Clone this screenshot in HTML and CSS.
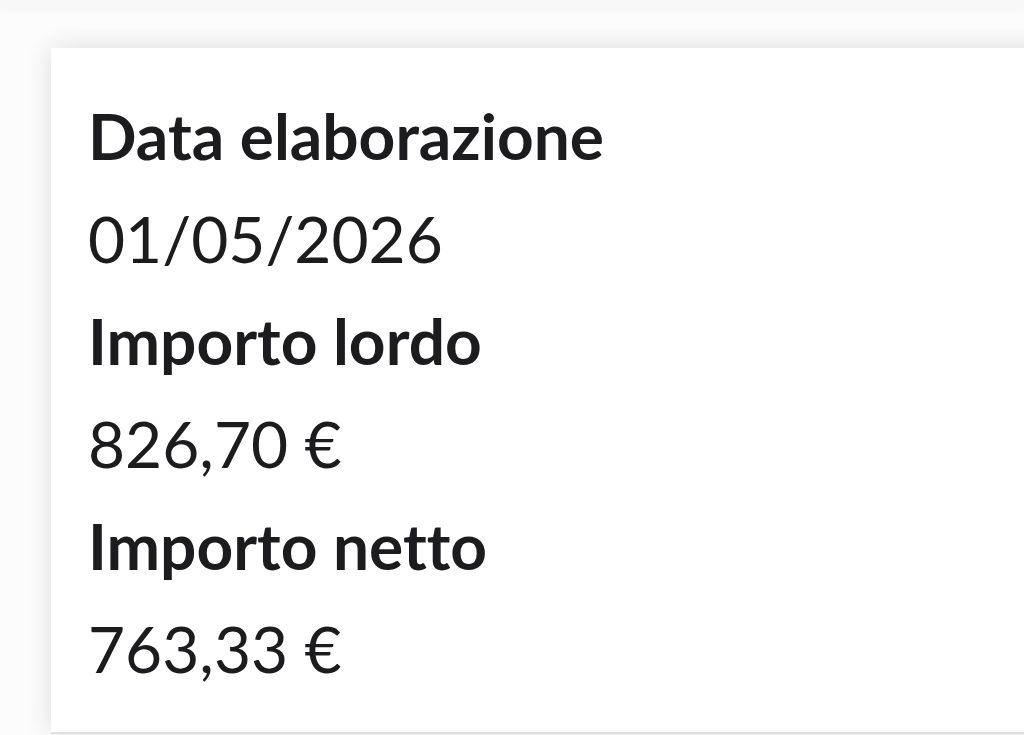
FILE: index.html
```html
<!DOCTYPE html>
<html lang="it">
<head>
<meta charset="utf-8">
<title>Dettaglio</title>
<link rel="stylesheet" href="styles.css">
</head>
<body>
<div class="top-strip"></div>
<section class="card">
  <dl class="details">
    <dt class="label">Data elaborazione</dt>
    <dd class="value">01/05/2026</dd>
    <dt class="label">Importo lordo</dt>
    <dd class="value">826,70 €</dd>
    <dt class="label">Importo netto</dt>
    <dd class="value">763,33 €</dd>
  </dl>
</section>
</body>
</html>
```
FILE: styles.css
```css
html, body {
  margin: 0;
  padding: 0;
}
body {
  background: #fcfcfc;
  width: 1024px;
  height: 735px;
  overflow: hidden;
  font-family: "Lato", "Open Sans", sans-serif;
  font-variant-ligatures: none;
  color: #1c1c1e;
}
.top-strip {
  height: 10px;
  background: #f8f8f8;
  box-shadow: 0 2px 6px rgba(0,0,0,0.025);
}
.card {
  margin: 38px -40px 0 51px;
  background: #ffffff;
  box-shadow: 0 0 24px rgba(0,0,0,0.13);
  padding: 37px 0 32px 37px;
  border-bottom: 2px solid #e0e0e0;
}
.details {
  margin: 0;
}
.label, .value {
  margin: 0;
  font-size: 64px;
  line-height: 102.5px;
  white-space: nowrap;
}
.label {
  font-weight: 700;
}
.value {
  font-weight: 400;
}
```
